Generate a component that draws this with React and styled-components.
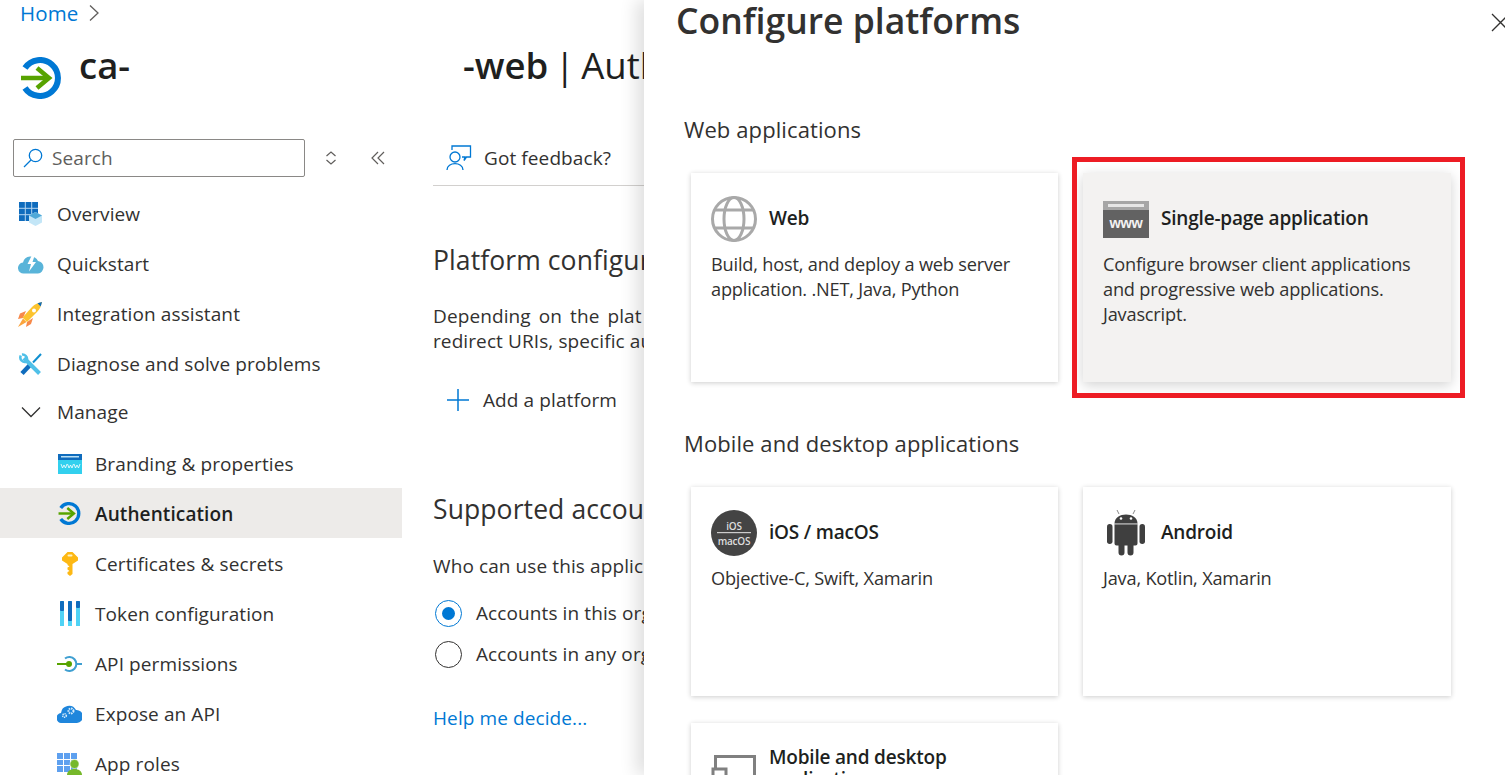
import React from 'react'
import styled, { createGlobalStyle } from 'styled-components'

const GlobalStyle = createGlobalStyle`
    html, body {
        margin: 0;
        padding: 0;
        background: #fff;
        overflow: hidden;
    }
    * {
        box-sizing: border-box;
    }
    svg {
        flex-shrink: 0;
    }
`

const Page = styled.div`
    display: flex;
    width: 1505px;
    height: 775px;
    overflow: hidden;
    font-family: "Open Sans", "Noto Sans", "Liberation Sans", sans-serif;
    font-size: 19px;
    letter-spacing: 0.1px;
    color: #323130;
`

const Blade = styled.div`
    flex: 0 0 644px;
    display: flex;
    flex-direction: column;
    min-width: 0;
    overflow: hidden;
`

const Breadcrumb = styled.div`
    display: flex;
    flex-shrink: 0;
    align-items: center;
    gap: 10px;
    height: 25px;
    padding-left: 20px;
    color: #0078d4;
    font-size: 20.5px;
`

const TitleRow = styled.div`
    display: flex;
    flex-shrink: 0;
    align-items: flex-start;
    height: 114px;
    padding: 32px 0 0 20px;
`

const BladeTitle = styled.h1`
    flex-shrink: 0;
    margin: 0;
    font-size: 36.5px;
    line-height: 17px;
    font-weight: 600;
    letter-spacing: 0;
    word-spacing: -3px;
    color: #201f1e;
    white-space: nowrap;
`

const TitleFirst = styled(BladeTitle)`
    margin-left: 17px;
    width: 384px;
`

const TitleLight = styled.span`
    font-weight: 400;
`

const Columns = styled.div`
    display: flex;
    flex: 1;
    min-height: 0;
`

const Sidebar = styled.nav`
    flex: 0 0 402px;
    display: flex;
    flex-direction: column;
`

const SearchRow = styled.div`
    display: flex;
    flex-shrink: 0;
    align-items: center;
    height: 38px;
    padding-left: 13px;
    margin-bottom: 12px;
`

const SearchBox = styled.div`
    display: flex;
    align-items: center;
    gap: 9px;
    width: 292px;
    height: 38px;
    padding-left: 9px;
    border: 1px solid #8a8886;
    border-radius: 2px;
    color: #605e5c;
`

const SearchTool = styled.span`
    display: flex;
    margin-left: ${props => props.$gap}px;
`

const NavRow = styled.div`
    display: flex;
    flex-shrink: 0;
    align-items: center;
    height: ${props => props.$height || 50}px;
    margin-bottom: ${props => props.$after || 0}px;
    padding-left: ${props => (props.$child ? 58 : 19)}px;
    padding-top: ${props => (props.$child ? 1 : 0)}px;
    gap: ${props => (props.$child ? 14 : 15)}px;
    background: ${props => (props.$active ? '#edebe9' : 'transparent')};
    font-weight: ${props => (props.$active ? 600 : 400)};
    color: ${props => (props.$active ? '#201f1e' : '#323130')};
    white-space: nowrap;
`

const NavIcon = styled.span`
    flex: 0 0 23px;
    min-width: 0;
    display: flex;
    align-items: center;
    justify-content: center;
`

const Main = styled.main`
    flex: 1;
    min-width: 0;
    padding-left: 31px;
    overflow: hidden;
    white-space: nowrap;
`

const CommandBar = styled.div`
    display: flex;
    align-items: center;
    gap: 12px;
    height: 47px;
    padding: 0 0 9px 13px;
    border-bottom: 1px solid #d2d0ce;
`

const SectionTitle = styled.h2`
    margin: ${props => props.$top}px 0 0;
    font-size: 26.5px;
    line-height: 34px;
    font-weight: 400;
    letter-spacing: 0.1px;
    color: #323130;
`

const Paragraph = styled.p`
    margin: ${props => props.$top}px 0 0;
    line-height: 25px;
`

const Spread = styled.span`
    word-spacing: 3px;
`

const AddButton = styled.div`
    display: flex;
    align-items: center;
    gap: 13px;
    height: 30px;
    margin: 31px 0 0 13px;
`

const RadioRow = styled.div`
    display: flex;
    align-items: center;
    gap: 14px;
    height: 28px;
    margin: ${props => props.$top}px 0 0 2px;
`

const Radio = styled.span`
    flex: 0 0 27px;
    height: 27px;
    border-radius: 50%;
    border: 1px solid ${props => (props.$checked ? '#0078d4' : '#323130')};
    display: flex;
    align-items: center;
    justify-content: center;
    &::after {
        content: '';
        display: ${props => (props.$checked ? 'block' : 'none')};
        width: 13px;
        height: 13px;
        border-radius: 50%;
        background: #0078d4;
    }
`

const HelpLink = styled.div`
    margin-top: 36px;
    line-height: 28px;
    color: #0078d4;
`

const Panel = styled.aside`
    flex: 0 0 861px;
    position: relative;
    background: #fff;
    box-shadow: -8px 0 16px rgba(0, 0, 0, 0.12);
    padding: 0 0 0 32px;
    overflow: hidden;
`

const PanelTitle = styled.h1`
    margin: 0;
    height: 43px;
    font-size: 35.5px;
    line-height: 41px;
    font-weight: 600;
    letter-spacing: 0;
    color: #323130;
`

const CloseButton = styled.span`
    position: absolute;
    top: 13px;
    right: -5px;
    display: flex;
`

const GroupTitle = styled.h2`
    margin: ${props => props.$top}px 0 0 8px;
    font-size: 22px;
    line-height: 30px;
    font-weight: 400;
    letter-spacing: 0.1px;
    color: #323130;
`

const CardGrid = styled.div`
    display: grid;
    grid-template-columns: 367px 368px;
    grid-auto-rows: 209px;
    column-gap: 25px;
    row-gap: 27px;
    margin: ${props => props.$top}px 0 0 15px;
`

const Card = styled.div`
    position: relative;
    padding: 23px 20px 0;
    background: ${props => (props.$selected ? '#f3f2f1' : '#fff')};
    box-shadow: ${props =>
        props.$selected
            ? '0 3px 12px rgba(0, 0, 0, 0.18)'
            : '0 1px 5px rgba(0, 0, 0, 0.2)'};
`

const CardHead = styled.div`
    display: flex;
    align-items: center;
    gap: 12px;
    height: 46px;
    font-weight: 600;
    line-height: 22px;
    letter-spacing: -0.2px;
    color: #201f1e;
`

const CardIcon = styled.span`
    flex: 0 0 46px;
    display: flex;
    justify-content: center;
`

const CardTitle = styled.span`
    margin-bottom: 2px;
`

const CardText = styled.div`
    margin-top: 10px;
    font-size: 18.2px;
    line-height: 25px;
    letter-spacing: -0.2px;
`

const RedFrame = styled.div`
    position: absolute;
    top: -16px;
    left: -11px;
    width: 393px;
    height: 241px;
    border: 5px solid #ed1c24;
    pointer-events: none;
`

const Chevron = () => (
    <svg width="12" height="18" viewBox="0 0 12 18" fill="none" stroke="#605e5c" strokeWidth="1.3">
        <path d="M2 1.5 10 9l-8 7.5" />
    </svg>
)

const AppRegIcon = ({ size = 42 }) => (
    <svg width={size} height={size} viewBox="0 0 42 42" fill="none">
        <path d="M5 11A18 18 0 1 1 5 31" stroke="#0078d4" strokeWidth="6" />
        <path d="M1 21h26" stroke="#57a300" strokeWidth="4.5" />
        <path d="M17 11l12 10-12 10" stroke="#57a300" strokeWidth="4.5" />
    </svg>
)

const SearchIcon = () => (
    <svg width="20" height="20" viewBox="0 0 20 20" fill="none" stroke="#0078d4" strokeWidth="1.3">
        <circle cx="12.5" cy="7.5" r="6.2" />
        <path d="M8 12 1 19" />
    </svg>
)

const SortIcon = () => (
    <svg width="12" height="14" viewBox="0 0 12 14" fill="none" stroke="#605e5c" strokeWidth="1.2">
        <path d="M1.5 5 6 1l4.500 4M1.500 9 6 13l4.500-4" />
    </svg>
)

const CollapseIcon = () => (
    <svg width="14" height="14" viewBox="0 0 14 14" fill="none" stroke="#605e5c" strokeWidth="1.2">
        <path d="M7 1 1 7l6 6M13 1 7 7l6 6" />
    </svg>
)

const OverviewIcon = () => (
    <svg width="23" height="24" viewBox="0 0 23 24">
        <rect x="0" y="0" width="19" height="19" fill="#0f6cbd" />
        <path d="M6.300 0v19M12.700 0v19M0 6.300h19M0 12.700h19" stroke="#b4d6f0" strokeWidth="1" />
        <path d="M16.500 10l6.500 3.500v7L16.500 24 10 20.500v-7z" fill="#c3e6f7" />
        <path d="M16.500 10l6.500 3.500-6.500 3.500-6.500-3.500z" fill="#50a9d8" />
    </svg>
)

const QuickstartIcon = () => (
    <svg width="26" height="20" viewBox="0 0 26 20">
        <path d="M6 19.500a5.500 5.500 0 0 1-1-11 8 8 0 0 1 15-1.500 6.300 6.300 0 0 1 0 12.500z" fill="#59b4d9" />
        <path d="M14.500 0 9.500 10h3.500L11 17.500 18 8h-3.500L17 .5z" fill="#fff" />
    </svg>
)

const RocketIcon = () => (
    <svg width="25" height="25" viewBox="0 0 25 25">
        <path d="M8 9 2 11.500 0 17l5-1z" fill="#f7894a" />
        <path d="M15 16l-2 6-5 3 1-5z" fill="#f7894a" />
        <path d="M5 16.500l-5 8.500 8.500-5z" fill="#fba43c" />
        <path d="M4.500 15.500 14 5c3-3 6-4 10-5-1 4-2 7-5 10L9 20z" fill="#fcc32e" />
        <path d="M19.500 1.300 24 0l-1.300 4.500z" fill="#0f6cbd" />
        <circle cx="16" cy="8.500" r="2" fill="#fff" />
    </svg>
)

const ToolsIcon = () => (
    <svg width="23" height="23" viewBox="0 0 23 23" fill="none">
        <path d="M22 1 14 9.500" stroke="#0f8fd0" strokeWidth="2" />
        <path d="M11 12 3 20.500" stroke="#0f6cbd" strokeWidth="4.500" />
        <path d="M5 5l15.500 15.500" stroke="#50c0e8" strokeWidth="4" />
        <path d="M1.800 2.500a4.500 4.500 0 0 0 6 6M3 1.500a4.500 4.500 0 0 1 5 5" stroke="#50c0e8" strokeWidth="2.500" />
    </svg>
)

const ManageChevron = () => (
    <svg width="20" height="12" viewBox="0 0 20 12" fill="none" stroke="#323130" strokeWidth="1.300">
        <path d="M1 1.500 10 10.500l9-9" />
    </svg>
)

const BrandingIcon = () => (
    <svg width="24" height="20" viewBox="0 0 24 20">
        <rect width="24" height="20" fill="#32d0ee" />
        <rect width="24" height="6" fill="#0f6cbd" />
        <rect x="3" y="2" width="18" height="1.500" fill="#b9e0f5" />
        <path d="M3 10l1.500 4L6 11l1.500 3L9 10M9.500 10l1.500 4 1.500-3 1.500 3 1.500-4M16 10l1.500 4 1.500-3 1.500 3 1.500-4" stroke="#fff" strokeWidth="0.800" fill="none" />
    </svg>
)

const KeyIcon = () => (
    <svg width="16" height="25" viewBox="0 0 16 25">
        <path d="M5.500 1h5L16 6.500v3L10.500 13v10L8 25l-2.500-2v-2l2-1-2-1.500v-2l2-1-2-1.500V13L0 9.500v-3z" fill="#fdb813" />
        <rect x="5.500" y="3.500" width="5" height="2" rx="1" fill="#fff2c4" />
    </svg>
)

const TokenIcon = () => (
    <svg width="20" height="25" viewBox="0 0 20 25">
        <rect x="0" y="0" width="4" height="25" fill="#50d3f5" />
        <rect x="0" y="0" width="4" height="10" rx="1" fill="#0f6cbd" />
        <rect x="8" y="0" width="4" height="25" fill="#50d3f5" />
        <rect x="8" y="0" width="4" height="20" rx="1" fill="#0f6cbd" />
        <rect x="16" y="0" width="4" height="25" fill="#50d3f5" />
        <rect x="16" y="0" width="4" height="7" rx="1" fill="#0f6cbd" />
    </svg>
)

const ApiIcon = () => (
    <svg width="25" height="18" viewBox="0 0 25 18" fill="none">
        <path d="M8 3.500a7 7 0 1 1 0 11" stroke="#3f9fd1" strokeWidth="2" />
        <path d="M19 9h6" stroke="#3f9fd1" strokeWidth="2" />
        <path d="M0 9h11" stroke="#57a300" strokeWidth="2" />
        <circle cx="12" cy="9" r="3" fill="#57a300" />
    </svg>
)

const CloudIcon = () => (
    <svg width="25" height="19" viewBox="0 0 25 19">
        <path d="M5 19a5 5 0 0 1-1-10 8 8 0 0 1 15-3 6.500 6.500 0 0 1 1 13z" fill="#1f86dc" />
        <circle cx="14" cy="7" r="2.500" fill="none" stroke="#d5eafa" strokeWidth="2" strokeDasharray="1.500 0.800" />
        <circle cx="7.500" cy="11.500" r="1.800" fill="none" stroke="#d5eafa" strokeWidth="1.600" strokeDasharray="1.200 0.700" />
    </svg>
)

const AppRolesIcon = () => (
    <svg width="25" height="22" viewBox="0 0 25 22">
        <rect x="0" y="0" width="20" height="19" fill="#5ea0ef" />
        <path d="M6.500 0v19M13.500 0v19M0 6.500h20M0 12.500h20" stroke="#fff" strokeWidth="1" />
        <circle cx="17.500" cy="11" r="4.500" fill="#76b82a" stroke="#fff" strokeWidth="0.500" />
        <path d="M10 22c0-8 15-8 15 0z" fill="#76b82a" />
    </svg>
)

const FeedbackIcon = () => (
    <svg width="26" height="26" viewBox="0 0 26 26" fill="none" stroke="#0078d4" strokeWidth="1.300">
        <path d="M6 5V1h18.500v11h-4L18 15.500l1-3.500h-3" />
        <circle cx="9" cy="12" r="5" />
        <path d="M1 25c0-8.500 16-8.500 16 0" />
    </svg>
)

const PlusIcon = () => (
    <svg width="24" height="24" viewBox="0 0 24 24" fill="none" stroke="#0078d4" strokeWidth="1.500">
        <path d="M12 1v22M1 12h22" />
    </svg>
)

const CloseIcon = () => (
    <svg width="19" height="19" viewBox="0 0 19 19" fill="none" stroke="#323130" strokeWidth="1.300">
        <path d="M1 1l17 17M18 1 1 18" />
    </svg>
)

const GlobeIcon = () => (
    <svg width="46" height="46" viewBox="0 0 46 46" fill="none" stroke="#a9a9a9" strokeWidth="3">
        <circle cx="23" cy="23" r="21.500" />
        <ellipse cx="23" cy="23" rx="10" ry="21.500" />
        <path d="M4 14h38M4 32h38" />
    </svg>
)

const WwwIcon = () => (
    <svg width="46" height="37" viewBox="0 0 46 37">
        <rect width="46" height="37" fill="#626262" />
        <rect width="46" height="9" fill="#a6a6a6" />
        <rect x="5" y="3" width="36" height="3" fill="#e6e6e6" />
        <text x="23" y="27" textAnchor="middle" fontFamily="Liberation Sans" fontSize="14.500" fill="#f2f2f2">www</text>
    </svg>
)

const AppleIcon = () => (
    <svg width="46" height="46" viewBox="0 0 46 46">
        <circle cx="23" cy="23" r="23" fill="#444" />
        <text x="23" y="19.500" textAnchor="middle" fontFamily="Open Sans" fontSize="10" fill="#ddd">iOS</text>
        <rect x="6" y="22" width="34" height="1.200" fill="#ccc" />
        <text x="23" y="34.500" textAnchor="middle" fontFamily="Open Sans" fontSize="10" fill="#ddd">macOS</text>
    </svg>
)

const AndroidIcon = () => (
    <svg width="38" height="46" viewBox="0 0 38 46" fill="#3f3f3f">
        <rect x="0" y="14" width="5.500" height="20" rx="2.700" />
        <rect x="32.500" y="14" width="5.500" height="20" rx="2.700" />
        <path d="M7.500 13.500c0-12 23-12 23 0z" />
        <rect x="7.500" y="13.500" width="23" height="1" fill="#9a9a9a" />
        <path d="M7.500 14.500h23v19a2 2 0 0 1-2 2h-2v7a3 3 0 0 1-6 0v-7h-3v7a3 3 0 0 1-6 0v-7h-2a2 2 0 0 1-2-2z" />
        <path d="M12 4 10 0M26 4l2-4" stroke="#888" strokeWidth="1" />
        <circle cx="14" cy="8.500" r="1.300" fill="#fff" />
        <circle cx="24" cy="8.500" r="1.300" fill="#fff" />
    </svg>
)

const DesktopIcon = () => (
    <svg width="46" height="46" viewBox="0 0 46 46" fill="none" stroke="#808080" strokeWidth="3">
        <path d="M4.500 22V10.500h39v30H17" />
        <rect x="2" y="23" width="13" height="22" />
    </svg>
)

const topItems = [
    { label: 'Overview', icon: <OverviewIcon /> },
    { label: 'Quickstart', icon: <QuickstartIcon /> },
    { label: 'Integration assistant', icon: <RocketIcon /> },
    { label: 'Diagnose and solve problems', icon: <ToolsIcon /> },
]

const manageItems = [
    { label: 'Branding & properties', icon: <BrandingIcon /> },
    { label: 'Authentication', icon: <AppRegIcon size={23} />, active: true },
    { label: 'Certificates & secrets', icon: <KeyIcon /> },
    { label: 'Token configuration', icon: <TokenIcon /> },
    { label: 'API permissions', icon: <ApiIcon /> },
    { label: 'Expose an API', icon: <CloudIcon /> },
    { label: 'App roles', icon: <AppRolesIcon /> },
]

function PlatformCard({ icon, title, text, selected, children }) {
    return (
        <Card $selected={selected}>
            <CardHead>
                <CardIcon>{icon}</CardIcon>
                <CardTitle>{title}</CardTitle>
            </CardHead>
            {text && <CardText>{text}</CardText>}
            {children}
        </Card>
    )
}

export default function App() {
    return (
        <Page>
            <GlobalStyle />
            <Blade>
                <Breadcrumb>
                    Home <Chevron />
                </Breadcrumb>
                <TitleRow>
                    <AppRegIcon />
                    <TitleFirst>ca-</TitleFirst>
                    <BladeTitle>
                        -web <TitleLight>| Auth</TitleLight>
                    </BladeTitle>
                </TitleRow>
                <Columns>
                    <Sidebar>
                        <SearchRow>
                            <SearchBox>
                                <SearchIcon />
                                Search
                            </SearchBox>
                            <SearchTool $gap={20}><SortIcon /></SearchTool>
                            <SearchTool $gap={34}><CollapseIcon /></SearchTool>
                        </SearchRow>
                        {topItems.map(item => (
                            <NavRow key={item.label}>
                                <NavIcon>{item.icon}</NavIcon>
                                {item.label}
                            </NavRow>
                        ))}
                        <NavRow $height={46} $after={3}>
                            <NavIcon><ManageChevron /></NavIcon>
                            Manage
                        </NavRow>
                        {manageItems.map(item => (
                            <NavRow key={item.label} $child $active={item.active}>
                                <NavIcon>{item.icon}</NavIcon>
                                {item.label}
                            </NavRow>
                        ))}
                    </Sidebar>
                    <Main>
                        <CommandBar>
                            <FeedbackIcon />
                            Got feedback?
                        </CommandBar>
                        <SectionTitle $top={57}>Platform configur</SectionTitle>
                        <Paragraph $top={27}>
                            <Spread>Depending on the plat</Spread>
                            <br />
                            redirect URIs, specific au
                        </Paragraph>
                        <AddButton>
                            <PlusIcon />
                            Add a platform
                        </AddButton>
                        <SectionTitle $top={77}>Supported accou</SectionTitle>
                        <Paragraph $top={28}>Who can use this applic</Paragraph>
                        <RadioRow $top={20}>
                            <Radio $checked />
                            Accounts in this org
                        </RadioRow>
                        <RadioRow $top={13}>
                            <Radio />
                            Accounts in any org
                        </RadioRow>
                        <HelpLink>Help me decide...</HelpLink>
                    </Main>
                </Columns>
            </Blade>
            <Panel>
                <PanelTitle>Configure platforms</PanelTitle>
                <CloseButton><CloseIcon /></CloseButton>
                <GroupTitle $top={71}>Web applications</GroupTitle>
                <CardGrid $top={29}>
                    <PlatformCard
                        icon={<GlobeIcon />}
                        title="Web"
                        text={<>Build, host, and deploy a web server<br />application. .NET, Java, Python</>}
                    />
                    <PlatformCard
                        selected
                        icon={<WwwIcon />}
                        title="Single-page application"
                        text={<>Configure browser client applications<br />and progressive web applications.<br />Javascript.</>}
                    >
                        <RedFrame />
                    </PlatformCard>
                </CardGrid>
                <GroupTitle $top={46}>Mobile and desktop applications</GroupTitle>
                <CardGrid $top={29}>
                    <PlatformCard
                        icon={<AppleIcon />}
                        title="iOS / macOS"
                        text="Objective-C, Swift, Xamarin"
                    />
                    <PlatformCard
                        icon={<AndroidIcon />}
                        title="Android"
                        text="Java, Kotlin, Xamarin"
                    />
                    <PlatformCard
                        icon={<DesktopIcon />}
                        title="Mobile and desktop applications"
                    />
                </CardGrid>
            </Panel>
        </Page>
    )
}
